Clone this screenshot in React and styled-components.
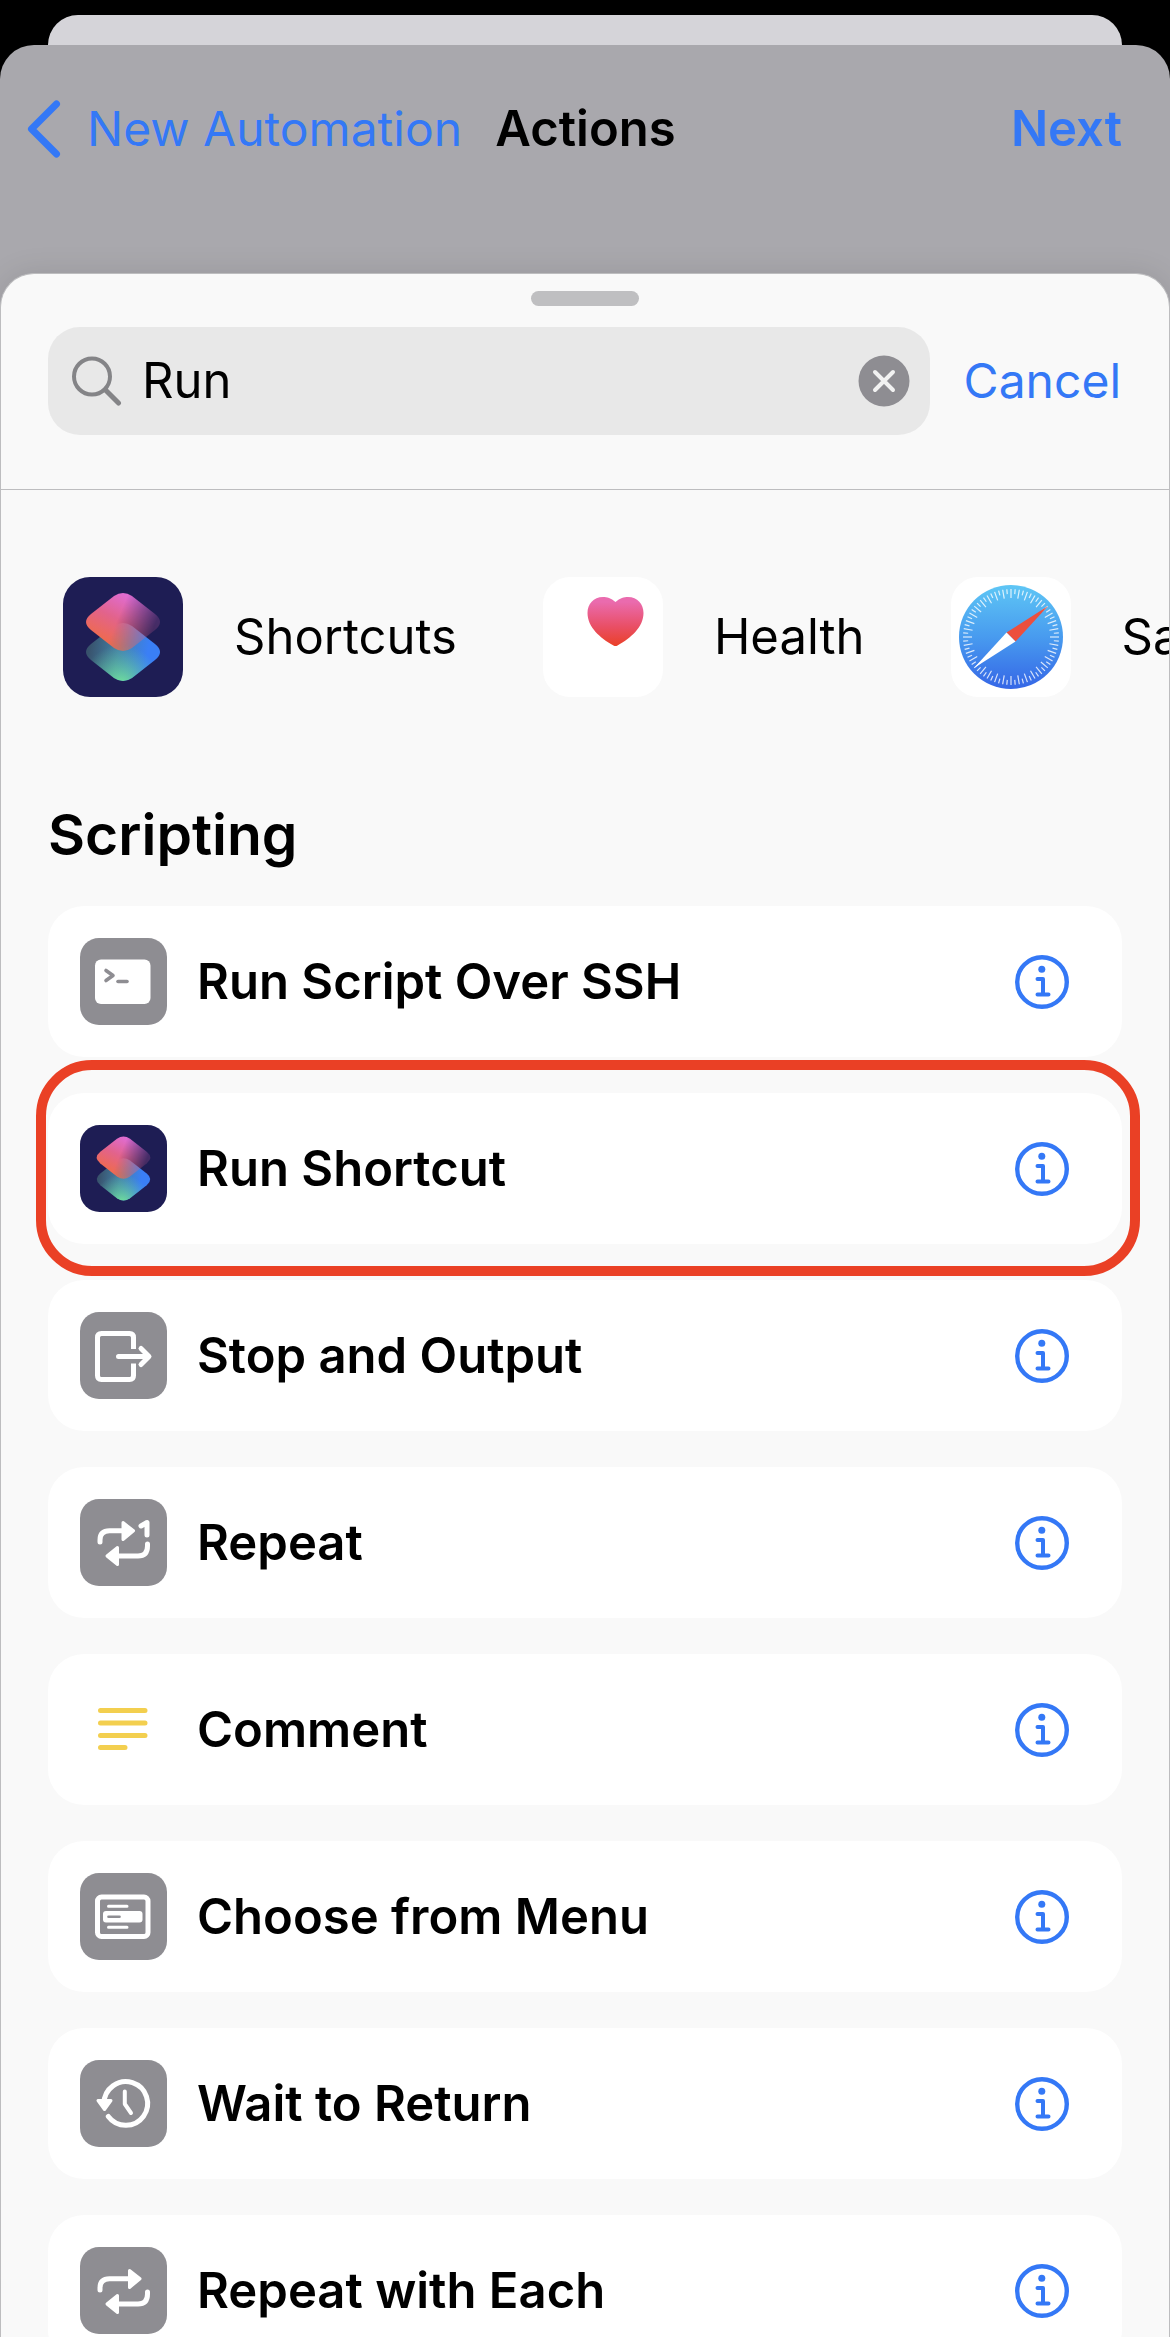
import React, { useId, useState } from "react";
import styled, { createGlobalStyle } from "styled-components";

const BLUE = "#3478f6";
const GREY = "#8e8d92";

const GlobalStyle = createGlobalStyle`
  *, *::before, *::after { box-sizing: border-box; }
  body {
    margin: 0;
    background: #000;
    color: #000;
    font-family: Inter, "Liberation Sans", sans-serif;
    font-size: 49px;
    line-height: 60px;
  }
  h1, h2, h3, p, ul { margin: 0; padding: 0; }
  button, input { font: inherit; color: inherit; border: 0; padding: 0; background: none; }
  button { cursor: pointer; }
  svg { display: block; flex: none; }
`;

const Screen = styled.div`
  display: flex;
  flex-direction: column;
  height: 100vh;
  padding-top: 15px;
  overflow: hidden;
`;

const BackSheet = styled.div`
  flex: none;
  height: 30px;
  margin: 0 48px;
  border-radius: 30px 30px 0 0;
  background: #d5d4d9;
`;

const ActionsSheet = styled.div`
  flex: 1;
  min-height: 0;
  display: flex;
  flex-direction: column;
  border-radius: 34px 34px 0 0;
  background: #a9a8ad;
`;

const NavBar = styled.header`
  flex: none;
  display: grid;
  grid-template-columns: 1fr auto 1fr;
  align-items: center;
  height: 228px;
  padding: 0 48px 60px 27px;
`;

const BackButton = styled.button`
  display: flex;
  align-items: center;
  gap: 26px;
  color: ${BLUE};
  font-size: 48px;
  white-space: nowrap;
`;

const NavTitle = styled.h1`
  padding-left: 22px;
  font-size: 49px;
  font-weight: 600;
`;

const TextButton = styled.button`
  justify-self: end;
  color: ${BLUE};
  font-size: ${(p) => (p.$strong ? 49 : 48)}px;
  font-weight: ${(p) => (p.$strong ? 600 : 400)};
`;

const SearchSheet = styled.main`
  flex: 1;
  min-height: 0;
  display: flex;
  flex-direction: column;
  border: 1px solid #bdbdbf;
  border-bottom: 0;
  border-radius: 34px 34px 0 0;
  background: #f9f9f9;
  box-shadow: 0 0 30px rgba(0, 0, 0, 0.1);
`;

const Grabber = styled.div`
  flex: none;
  align-self: center;
  width: 108px;
  height: 15px;
  margin: 17px 0 21px;
  border-radius: 8px;
  background: #bfbfc1;
`;

const SearchBar = styled.form`
  flex: none;
  display: flex;
  align-items: center;
  gap: 34px;
  padding: 0 48px 54px 47px;
  border-bottom: 1px solid #bdbdbf;
`;

const SearchField = styled.label`
  flex: 1;
  min-width: 0;
  display: flex;
  align-items: center;
  gap: 20px;
  height: 108px;
  padding: 0 20px 0 24px;
  border-radius: 32px;
  background: #e8e8e8;
`;

const SearchInput = styled.input`
  flex: 1;
  min-width: 0;
  outline: none;
`;

const Results = styled.div`
  flex: 1;
  min-height: 0;
  overflow-y: auto;
  scrollbar-width: none;
`;

const AppStrip = styled.nav`
  display: flex;
  gap: 86px;
  padding: 87px 0 0 62px;
  overflow-x: auto;
  scrollbar-width: none;
`;

const AppLink = styled.a`
  flex: none;
  display: flex;
  align-items: center;
  gap: 51px;
  color: inherit;
  text-decoration: none;
`;

const Section = styled.section`
  padding: 102px 47px 36px;
`;

const SectionTitle = styled.h2`
  font-size: 57px;
  line-height: 72px;
  font-weight: 600;
`;

const ActionList = styled.ul`
  display: flex;
  flex-direction: column;
  gap: 36px;
  margin-top: 35px;
  list-style: none;
`;

const ActionRow = styled.li`
  position: relative;
  display: flex;
  align-items: center;
  gap: 30px;
  height: 151px;
  padding: 0 53px 0 32px;
  border-radius: 36px;
  background: #fff;
`;

const ActionName = styled.h3`
  flex: 1;
  font-size: 49px;
  font-weight: 600;
`;

const Highlight = styled.span`
  position: absolute;
  inset: -33px -18px -32px -12px;
  border: 10px solid #ea4025;
  border-radius: 56px;
  pointer-events: none;
`;

/* ---------- drawings ---------- */

const Line = ({ d, color = "#fff", width = 5 }) => (
  <path d={d} fill="none" stroke={color} strokeWidth={width} strokeLinecap="round" strokeLinejoin="round" />
);

const Solid = ({ d }) => (
  <path d={d} fill="#fff" stroke="#fff" strokeWidth="3" strokeLinejoin="round" />
);

const Tile = ({ fill = GREY, children }) => (
  <svg width="87" height="87" viewBox="0 0 87 87" aria-hidden="true">
    <rect width="87" height="87" rx="19" fill={fill} />
    {children}
  </svg>
);

const diamond = (cy) =>
  `M51 ${cy - 26} Q60 ${cy - 32} 69 ${cy - 26} L92 ${cy - 8} Q102 ${cy} 92 ${cy + 8} L69 ${cy + 26} Q60 ${cy + 32} 51 ${cy + 26} L28 ${cy + 8} Q18 ${cy} 28 ${cy - 8} Z`;

function ShortcutsIcon({ size }) {
  const id = useId();
  return (
    <svg width={size} height={size} viewBox="0 0 120 120" aria-hidden="true">
      <defs>
        <linearGradient id={id + "low"} gradientUnits="userSpaceOnUse" x1="26" y1="70" x2="84" y2="80">
          <stop offset="0" stopColor="#38526c" />
          <stop offset="0.5" stopColor="#4482a8" />
          <stop offset="1" stopColor="#3a7ff6" />
        </linearGradient>
        <radialGradient id={id + "green"} gradientUnits="userSpaceOnUse" cx="58" cy="108" r="40">
          <stop offset="0" stopColor="#74e69a" />
          <stop offset="1" stopColor="#60c8a0" stopOpacity="0" />
        </radialGradient>
        <linearGradient id={id + "top"} gradientUnits="userSpaceOnUse" x1="40" y1="62" x2="62" y2="18">
          <stop offset="0" stopColor="#ee6a52" />
          <stop offset="0.5" stopColor="#e2638c" />
          <stop offset="1" stopColor="#e06cd0" />
        </linearGradient>
        <linearGradient id={id + "fade"} gradientUnits="userSpaceOnUse" x1="54" y1="44" x2="88" y2="58">
          <stop offset="0" stopColor="#fff" />
          <stop offset="1" stopColor="#fff" stopOpacity="0.2" />
        </linearGradient>
        <mask id={id + "mask"}>
          <rect width="120" height="120" fill={`url(#${id}fade)`} />
        </mask>
      </defs>
      <rect width="120" height="120" rx="27" fill="#1e1d54" />
      <path d={diamond(75)} fill={`url(#${id}low)`} />
      <path d={diamond(75)} fill={`url(#${id}green)`} />
      <path d={diamond(45)} fill={`url(#${id}top)`} mask={`url(#${id}mask)`} />
    </svg>
  );
}

function HealthIcon() {
  const id = useId();
  return (
    <svg width="120" height="120" viewBox="0 0 120 120" aria-hidden="true">
      <linearGradient id={id} x1="0" y1="0" x2="0" y2="1">
        <stop offset="0.1" stopColor="#ea6bae" />
        <stop offset="0.6" stopColor="#e94f66" />
        <stop offset="1" stopColor="#ea4028" />
      </linearGradient>
      <rect width="120" height="120" rx="27" fill="#fff" />
      <path
        d="M72.500 25 C68 21 64 20 60 20 C50.500 20 44.500 27 44.500 36 C44.500 50 57 61 70.500 68.500 Q72.500 69.500 74.500 68.500 C88 61 100.500 50 100.500 36 C100.500 27 94.500 20 85 20 C81 20 77 21 72.500 25 Z"
        fill={`url(#${id})`}
      />
    </svg>
  );
}

function SafariIcon() {
  const id = useId();
  const ticks = Array.from({ length: 72 }, (_, i) => i);
  return (
    <svg width="120" height="120" viewBox="0 0 120 120" aria-hidden="true">
      <linearGradient id={id} x1="0" y1="0" x2="0" y2="1">
        <stop offset="0" stopColor="#5ec6f5" />
        <stop offset="0.5" stopColor="#489bef" />
        <stop offset="1" stopColor="#3566e6" />
      </linearGradient>
      <rect width="120" height="120" rx="27" fill="#fff" />
      <circle cx="60" cy="60" r="52" fill={`url(#${id})`} />
      {ticks.map((i) => (
        <line
          key={i}
          x1="60"
          x2="60"
          y1="12"
          y2={i % 2 ? 17 : 21}
          stroke="#fff"
          strokeOpacity="0.8"
          strokeWidth="1.2"
          transform={`rotate(${i * 5} 60 60)`}
        />
      ))}
      <path d="M97 29 L55.500 55.500 L64.500 64.500 Z" fill="#ec4f3e" />
      <path d="M23 91 L55.500 55.500 L64.500 64.500 Z" fill="#fff" />
    </svg>
  );
}

const TerminalIcon = () => (
  <Tile>
    <rect x="15" y="21.500" width="55.500" height="44.500" rx="6" fill="#fff" />
    <Line d="M26 32.500 L33 37.500 L26 42.500" color={GREY} width={3.6} />
    <Line d="M38 43.500 H47" color={GREY} width={3.6} />
  </Tile>
);

const OutputIcon = () => (
  <Tile>
    <path
      d="M53.500 37 V25.500 Q53.500 21.500 49.500 21.500 H21.500 Q17.500 21.500 17.500 25.500 V63.500 Q17.500 67.500 21.500 67.500 H49.500 Q53.500 67.500 53.500 63.500 V51.500"
      fill="none"
      stroke="#fff"
      strokeWidth="5"
    />
    <Line d="M38.500 44.500 H68 M61 36.500 L69 44.500 L61 52.500" />
  </Tile>
);

const RepeatIcon = ({ once }) => (
  <Tile>
    <Line d={`M20 43 V41 Q20 31.800 29.500 31.800 H${once ? 42 : 48}`} />
    <Solid d={once ? "M43 23.500 L53.500 31.800 L43 40.500 Z" : "M49.500 23.500 L60 31.800 L49.500 40.500 Z"} />
    {once && <Line d="M61 27 L67 23.500 V36" />}
    <Line d="M67.500 45 V47 Q67.500 57 58 57 H38" />
    <Solid d="M37.500 48.500 L27 57 L37.500 65.500 Z" />
  </Tile>
);

const CommentIcon = () => (
  <Tile fill="#fff">
    <Line d="M20.500 24.500 H65 M20.500 37 H65 M20.500 49.500 H65 M20.500 61.500 H45" color="#f3cf4f" />
  </Tile>
);

const MenuIcon = () => (
  <Tile>
    <rect x="17.500" y="24" width="50.500" height="39.500" rx="4" fill="none" stroke="#fff" strokeWidth="5" />
    <Line d="M28.500 33.300 H47 M28.500 54.300 H47" width={3} />
    <rect x="23" y="38" width="39.500" height="11.500" rx="3" fill="#fff" />
    <Line d="M28.500 43.800 H39.500" color={GREY} width={2.6} />
  </Tile>
);

const HistoryIcon = () => (
  <Tile>
    <Line d="M24 43.500 A21.800 21.800 0 1 1 28.300 56.500" />
    <Solid d="M18 40.500 H31 L24.500 49.500 Z" />
    <Line d="M44.800 31.500 V44 L51 53" width={4} />
  </Tile>
);

const InfoIcon = () => (
  <svg width="54" height="54" viewBox="0 0 54 54" fill="none" stroke={BLUE} strokeWidth="4" strokeLinecap="round" strokeLinejoin="round" aria-hidden="true">
    <circle cx="27" cy="27" r="24.800" strokeWidth="4.400" />
    <circle cx="26.800" cy="14.300" r="3.500" fill={BLUE} stroke="none" />
    <path d="M22.500 24 H28 V39.500 M22.500 39.500 H33.500" />
  </svg>
);

const ChevronIcon = () => (
  <svg width="34" height="58" viewBox="0 0 34 58" fill="none" stroke={BLUE} strokeWidth="7" strokeLinecap="round" strokeLinejoin="round" aria-hidden="true">
    <path d="M29.500 4 L4.500 29 L29.500 54" />
  </svg>
);

const SearchIcon = () => (
  <svg width="50" height="50" viewBox="0 0 50 50" fill="none" stroke="#848487" strokeWidth="4" strokeLinecap="round" aria-hidden="true">
    <circle cx="20" cy="20.500" r="18" />
    <path d="M33.500 34 L46.500 47" strokeWidth="5" />
  </svg>
);

const ClearIcon = () => (
  <svg width="52" height="52" viewBox="0 0 52 52" aria-hidden="true">
    <circle cx="26" cy="26" r="25.500" fill={GREY} />
    <path d="M17 17 L35 35 M35 17 L17 35" stroke="#f2f2f2" strokeWidth="4" strokeLinecap="round" />
  </svg>
);

/* ---------- data ---------- */

const apps = [
  { name: "Shortcuts", icon: <ShortcutsIcon size={120} /> },
  { name: "Health", icon: <HealthIcon /> },
  { name: "Safari", icon: <SafariIcon /> },
];

const actions = [
  { name: "Run Script Over SSH", icon: <TerminalIcon /> },
  { name: "Run Shortcut", icon: <ShortcutsIcon size={87} />, highlighted: true },
  { name: "Stop and Output", icon: <OutputIcon /> },
  { name: "Repeat", icon: <RepeatIcon once /> },
  { name: "Comment", icon: <CommentIcon /> },
  { name: "Choose from Menu", icon: <MenuIcon /> },
  { name: "Wait to Return", icon: <HistoryIcon /> },
  { name: "Repeat with Each", icon: <RepeatIcon /> },
];

export default function App() {
  const [query, setQuery] = useState("Run");
  return (
    <>
      <GlobalStyle />
      <Screen>
        <BackSheet />
        <ActionsSheet>
          <NavBar>
            <BackButton type="button">
              <ChevronIcon />
              New Automation
            </BackButton>
            <NavTitle>Actions</NavTitle>
            <TextButton type="button" $strong>
              Next
            </TextButton>
          </NavBar>
          <SearchSheet>
            <Grabber />
            <SearchBar onSubmit={(e) => e.preventDefault()}>
              <SearchField>
                <SearchIcon />
                <SearchInput
                  type="text"
                  aria-label="Search actions"
                  value={query}
                  onChange={(e) => setQuery(e.target.value)}
                />
                <button type="button" aria-label="Clear search" onClick={() => setQuery("")}>
                  <ClearIcon />
                </button>
              </SearchField>
              <TextButton type="button">Cancel</TextButton>
            </SearchBar>
            <Results>
              <AppStrip aria-label="Apps">
                {apps.map((app) => (
                  <AppLink key={app.name} href={`#${app.name.toLowerCase()}`}>
                    {app.icon}
                    {app.name}
                  </AppLink>
                ))}
              </AppStrip>
              <Section>
                <SectionTitle>Scripting</SectionTitle>
                <ActionList>
                  {actions.map((action) => (
                    <ActionRow key={action.name}>
                      {action.icon}
                      <ActionName>{action.name}</ActionName>
                      <button type="button" aria-label={`About ${action.name}`}>
                        <InfoIcon />
                      </button>
                      {action.highlighted && <Highlight />}
                    </ActionRow>
                  ))}
                </ActionList>
              </Section>
            </Results>
          </SearchSheet>
        </ActionsSheet>
      </Screen>
    </>
  );
}
